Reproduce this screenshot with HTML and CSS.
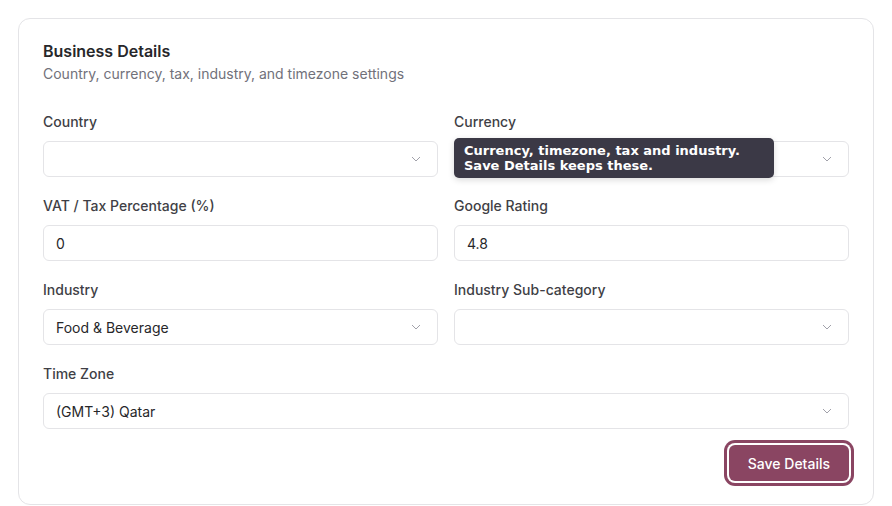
FILE: index.html
```html
<!DOCTYPE html>
<html lang="en">
    <head>
        <meta charset="UTF-8">
        <meta name="viewport" content="width=device-width, initial-scale=1.0">
        <title>Business Details</title>
        <link rel="stylesheet" href="styles.css">
    </head>
    <body>
        <div class="settings-card">
            <h2 class="card-title">Business Details</h2>
            <p class="card-subtitle">Country, currency, tax, industry, and timezone settings</p>

            <div class="form-grid">
                <div class="form-group">
                    <label>Country</label>
                    <div class="select-box">
                        <span></span>
                        <svg class="chevron" viewBox="0 0 10 6" width="10" height="6"><path d="M1 1l4 4 4-4" fill="none" stroke="currentColor" stroke-width="1"/></svg>
                    </div>
                </div>
                <div class="form-group">
                    <label>Currency</label>
                    <div class="select-box">
                        <span></span>
                        <svg class="chevron" viewBox="0 0 10 6" width="10" height="6"><path d="M1 1l4 4 4-4" fill="none" stroke="currentColor" stroke-width="1"/></svg>
                    </div>
                </div>
                <div class="form-group">
                    <label for="vat">VAT / Tax Percentage (%)</label>
                    <input type="text" id="vat" class="form-input" value="0">
                </div>
                <div class="form-group">
                    <label for="rating">Google Rating</label>
                    <input type="text" id="rating" class="form-input" value="4.8">
                </div>
                <div class="form-group">
                    <label>Industry</label>
                    <div class="select-box">
                        <span>Food &amp; Beverage</span>
                        <svg class="chevron" viewBox="0 0 10 6" width="10" height="6"><path d="M1 1l4 4 4-4" fill="none" stroke="currentColor" stroke-width="1"/></svg>
                    </div>
                </div>
                <div class="form-group">
                    <label>Industry Sub-category</label>
                    <div class="select-box">
                        <span></span>
                        <svg class="chevron" viewBox="0 0 10 6" width="10" height="6"><path d="M1 1l4 4 4-4" fill="none" stroke="currentColor" stroke-width="1"/></svg>
                    </div>
                </div>
                <div class="form-group full">
                    <label>Time Zone</label>
                    <div class="select-box">
                        <span>(GMT+3) Qatar</span>
                        <svg class="chevron" viewBox="0 0 10 6" width="10" height="6"><path d="M1 1l4 4 4-4" fill="none" stroke="currentColor" stroke-width="1"/></svg>
                    </div>
                </div>
            </div>

            <div class="form-actions">
                <button type="button" class="save-btn">Save Details</button>
            </div>

            <div class="tooltip">Currency, timezone, tax and industry.<br>Save Details keeps these.</div>
        </div>
    </body>
</html>
```

FILE: styles.css
```css
/* Global styles */
* {
    margin: 0;
    padding: 0;
    box-sizing: border-box;
    font-family: Inter, "Noto Sans", sans-serif;
}

body {
    background-color: #fff;
    color: #27272a;
    padding: 18px;
}

.settings-card {
    position: relative;
    width: 856px;
    background: #fff;
    border: 1px solid #e4e4e7;
    border-radius: 12px;
    padding: 21px 24px 23px;
}

.card-title {
    font-size: 16px;
    font-weight: 600;
    line-height: 22px;
    color: #27272a;
    margin-bottom: 2px;
}

.card-subtitle {
    font-size: 14px;
    line-height: 20px;
    color: #71717a;
    margin-bottom: 28px;
}

.form-grid {
    display: grid;
    grid-template-columns: 1fr 1fr;
    column-gap: 16px;
    row-gap: 19px;
}

.form-group {
    display: flex;
    flex-direction: column;
    gap: 9px;
}

.form-group.full {
    grid-column: 1 / -1;
}

.form-group label {
    font-size: 14px;
    font-weight: 500;
    line-height: 20px;
    color: #3f3f46;
}

.form-input,
.select-box {
    width: 100%;
    height: 36px;
    padding: 0 12px;
    background: #fff;
    border: 1px solid #e4e4e7;
    border-radius: 6px;
    font-size: 14px;
    color: #27272a;
}

.form-input:focus {
    outline: none;
}

.select-box {
    display: flex;
    align-items: center;
    justify-content: space-between;
}

.chevron {
    color: #a1a1aa;
    margin-right: 4px;
}

.form-actions {
    display: flex;
    justify-content: flex-end;
    margin-top: 16px;
}

.save-btn {
    height: 36px;
    padding: 0 19px;
    background: #8a4562;
    color: #fff;
    border: none;
    border-radius: 6px;
    font-size: 14px;
    font-weight: 500;
    box-shadow: 0 0 0 2px #fff, 0 0 0 5px #8a4562;
    cursor: pointer;
}

.tooltip {
    position: absolute;
    left: 435px;
    top: 119px;
    width: 320px;
    padding: 5px 10px;
    background: #3b3946;
    color: #fff;
    border-radius: 5px;
    font-family: "DejaVu Sans", sans-serif;
    font-size: 13px;
    font-weight: bold;
    line-height: 15px;
    box-shadow: 0 2px 6px rgba(0, 0, 0, 0.15);
}
```
